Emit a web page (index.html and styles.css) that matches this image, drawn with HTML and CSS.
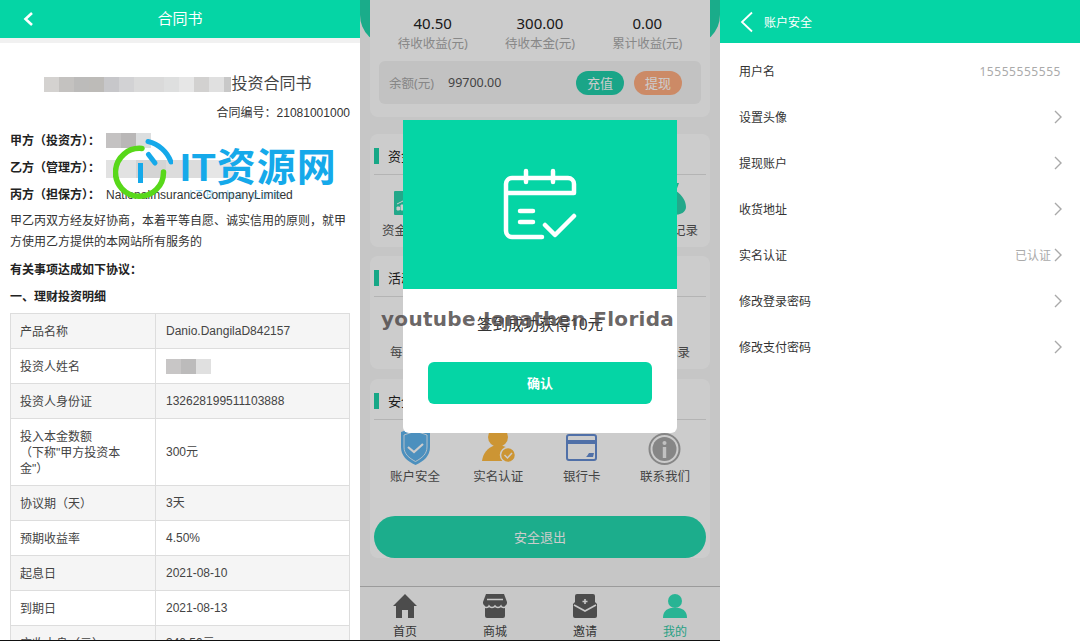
FILE: index.html
```html
<!DOCTYPE html>
<html lang="zh-CN">
<head>
<meta charset="utf-8">
<title>合同书</title>
<link rel="stylesheet" href="styles.css">
</head>
<body>
<div class="screens">

  <section class="phone contract">
    <header class="contract-head">
      <svg class="contract-back" viewBox="0 0 12 16"><path d="M10 2 3.500 8l6.500 6"/></svg>
      <span>合同书</span>
    </header>
    <div class="contract-band"></div>
    <div class="contract-body">
      <h1 class="contract-title"><span class="mosaic mosaic-title"></span>投资合同书</h1>
      <p class="contract-no">合同编号：21081001000</p>
      <p class="party"><b>甲方（投资方）：</b><span class="mosaic mosaic-a"></span></p>
      <p class="party"><b>乙方（管理方）：</b><span class="mosaic mosaic-b"></span></p>
      <p class="party"><b>丙方（担保方）：</b>NationalInsuranceCompanyLimited</p>
      <p class="para">甲乙丙双方经友好协商，本着平等自愿、诚实信用的原则，就甲方使用乙方提供的本网站所有服务的</p>
      <p class="party"><b>有关事项达成如下协议：</b></p>
      <p class="party"><b>一、理财投资明细</b></p>
      <table class="detail">
        <tr><td>产品名称</td><td>Danio.DangilaD842157</td></tr>
        <tr><td>投资人姓名</td><td><span class="mosaic mosaic-c"></span></td></tr>
        <tr><td>投资人身份证</td><td>132628199511103888</td></tr>
        <tr><td>投入本金数额<br>（下称"甲方投资本<br>金"）</td><td>300元</td></tr>
        <tr><td>协议期（天）</td><td>3天</td></tr>
        <tr><td>预期收益率</td><td>4.50%</td></tr>
        <tr><td>起息日</td><td>2021-08-10</td></tr>
        <tr><td>到期日</td><td>2021-08-13</td></tr>
        <tr><td>应收本息（元）</td><td>340.50元</td></tr>
      </table>
    </div>
    <div class="logo-mark">
      <svg class="logo-icon" viewBox="0 0 60 62">
        <path class="logo-green" d="M29 10.500A24 24 0 1 0 50.500 34"/>
        <path class="logo-blue" d="M35 3.500A32 32 0 0 1 58 24"/>
        <path class="logo-blue" d="M35.500 16.500 42 25"/>
        <path class="logo-blue logo-bar" d="M27.500 25v20"/>
      </svg>
      <span class="logo-text">IT资源网</span>
      <span class="logo-sub">ITBobu.com</span>
    </div>
  </section>

  <section class="phone member">
    <div class="member-arc"></div>
    <div class="member-page">
      <div class="card card-stats">
        <div class="stats">
          <div class="stat"><strong>40.50</strong><span>待收收益(元)</span></div>
          <div class="stat"><strong>300.00</strong><span>待收本金(元)</span></div>
          <div class="stat"><strong>0.00</strong><span>累计收益(元)</span></div>
        </div>
        <div class="balance">
          <span class="balance-label">余额(元)</span>
          <span class="balance-value">99700.00</span>
          <span class="pill pill-green">充值</span>
          <span class="pill pill-orange">提现</span>
        </div>
      </div>

      <div class="card card-menu card-funds">
        <h2 class="card-title">资金管理</h2>
        <div class="menu menu-wide">
          <div class="menu-item">
            <svg class="menu-icon" viewBox="0 0 26 32"><path class="fill-green" d="M1 8h10V5h2v3h12a1 1 0 0 1 1 1v22a1 1 0 0 1-1 1H1a1 1 0 0 1-1-1V9a1 1 0 0 1 1-1z"/><path class="chart-mark" d="M3 27h2.500v-3H3zM7 27h2.500v-5H7zM3 21l8-4"/></svg>
            <span>资金明细</span>
          </div>
          <div class="menu-item"><span>充值记录</span></div>
          <div class="menu-item"><span>提现记录</span></div>
          <div class="menu-item">
            <svg class="menu-icon" viewBox="0 0 26 32"><path class="fill-green" d="M7 0h12l-3 8c6 4 10 10 10 16 0 5-5 8-13 8S0 29 0 24c0-6 4-12 10-16z"/></svg>
            <span>收益记录</span>
          </div>
        </div>
      </div>

      <div class="card card-menu card-activity">
        <h2 class="card-title">活动中心</h2>
        <div class="menu">
          <div class="menu-item"><svg class="menu-icon" viewBox="0 0 26 32"></svg><span>每日签到</span></div>
          <div class="menu-item"><svg class="menu-icon" viewBox="0 0 26 32"></svg><span>积分商城</span></div>
          <div class="menu-item"><svg class="menu-icon" viewBox="0 0 26 32"></svg><span>幸运抽奖</span></div>
          <div class="menu-item">
            <svg class="menu-icon" viewBox="0 0 26 32"><path class="fill-red" d="M4 7h20v9H4z"/><path class="fill-tan" d="M6 18h16v12H6z"/></svg>
            <span>中奖记录</span>
          </div>
        </div>
      </div>

      <div class="card card-menu card-safe">
        <h2 class="card-title">安全中心</h2>
        <div class="menu">
          <div class="menu-item">
            <svg class="menu-icon" viewBox="0 0 33 38"><path class="fill-blue" d="M16.500 0 31 5v15c0 9-6 14-14.500 18C8 34 2 29 2 20V5z"/><path class="shield-in" d="M16.500 4 28 8v12c0 7-5 11-11.500 14.500C10 31 5 27 5 20V8z"/><path class="shield-check" d="m9 20 6 5 9-8"/></svg>
            <span>账户安全</span>
          </div>
          <div class="menu-item">
            <svg class="menu-icon" viewBox="0 0 33 38"><circle class="fill-gold" cx="16" cy="10" r="10"/><path class="fill-gold" d="M0 34c1-8 6-13 11-15h10c4 1 7 4 8 7l-9 8z"/><circle class="fill-gold badge-ring" cx="26" cy="28" r="7.500"/><path class="badge-check" d="m22.500 28 3 3 4.500-5"/></svg>
            <span>实名认证</span>
          </div>
          <div class="menu-item">
            <svg class="menu-icon" viewBox="0 0 33 38"><rect class="card-outline" x="2" y="8" width="29" height="25" rx="2"/><path class="fill-navy" d="M2 13h29v4H2zM22 29l2-3h5l-1 4h-7z"/></svg>
            <span>银行卡</span>
          </div>
          <div class="menu-item">
            <svg class="menu-icon" viewBox="0 0 33 38"><circle class="info-ring" cx="16.500" cy="22" r="15"/><circle class="fill-grey" cx="16.500" cy="22" r="12"/><circle class="info-mark" cx="16.500" cy="16" r="2"/><path class="info-mark" d="M14.800 20h3.400v11h-3.400z"/></svg>
            <span>联系我们</span>
          </div>
        </div>
        <div class="logout">安全退出</div>
      </div>
    </div>

    <nav class="tabs">
      <div class="tab">
        <svg class="tab-icon" viewBox="0 0 24 24"><path d="M12 0 24 12h-3v12h-6v-8H9v8H3V12H0z"/></svg>
        <span>首页</span>
      </div>
      <div class="tab">
        <svg class="tab-icon" viewBox="0 0 24 24"><path d="M3 0h18l3 8a4 4 0 0 1-2 4v10a2 2 0 0 1-2 2H4a2 2 0 0 1-2-2V12a4 4 0 0 1-2-4z"/><path class="tab-cut" d="M4 5.500h16M0 12c2.500 2 5 2 6 0 1.500 2 4.500 2 6 0 1.500 2 4.500 2 6 0 1 2 3.500 2 6 0"/></svg>
        <span>商城</span>
      </div>
      <div class="tab">
        <svg class="tab-icon" viewBox="0 0 24 24"><path d="M4 0h16a2 2 0 0 1 2 2v6l2 2v12a2 2 0 0 1-2 2H2a2 2 0 0 1-2-2V10l2-2V2a2 2 0 0 1 2-2z"/><path class="tab-cut" d="M1 11l11 6 11-6M12 5v5M9.500 7.500h5"/></svg>
        <span>邀请</span>
      </div>
      <div class="tab tab-on">
        <svg class="tab-icon" viewBox="0 0 24 24"><circle cx="12" cy="7" r="7"/><path d="M0 24c0-6 3-9 8-10h8c5 1 8 4 8 10z"/></svg>
        <span>我的</span>
      </div>
    </nav>

    <div class="shade"></div>
    <div class="dialog">
      <div class="dialog-top">
        <svg class="dialog-icon" viewBox="0 0 80 80"><path d="M74 28v-9a6 6 0 0 0-6-6H12a6 6 0 0 0-6 6v47a6 6 0 0 0 6 6h30M6 28h68M26 6v11M53 6v11M20 46h13M20 57h13M45 60l10 10 19-19"/></svg>
      </div>
      <p class="dialog-msg">签到成功获得10元</p>
      <div class="dialog-btn">确认</div>
    </div>
    <div class="stamp">youtube Jonathen Florida</div>
  </section>

  <section class="phone account">
    <header class="account-head">
      <svg class="account-back" viewBox="0 0 14 22"><path d="M12 1.500 2 11l10 9.500"/></svg>
      <span>账户安全</span>
    </header>
    <div class="rows">
      <div class="row"><span>用户名</span><span class="row-value row-num">15555555555</span></div>
      <div class="row"><span>设置头像</span><svg class="chev" viewBox="0 0 8 14"><path d="m1 1 6 6-6 6"/></svg></div>
      <div class="row"><span>提现账户</span><svg class="chev" viewBox="0 0 8 14"><path d="m1 1 6 6-6 6"/></svg></div>
      <div class="row"><span>收货地址</span><svg class="chev" viewBox="0 0 8 14"><path d="m1 1 6 6-6 6"/></svg></div>
      <div class="row"><span>实名认证</span><span class="row-value">已认证</span><svg class="chev" viewBox="0 0 8 14"><path d="m1 1 6 6-6 6"/></svg></div>
      <div class="row"><span>修改登录密码</span><svg class="chev" viewBox="0 0 8 14"><path d="m1 1 6 6-6 6"/></svg></div>
      <div class="row"><span>修改支付密码</span><svg class="chev" viewBox="0 0 8 14"><path d="m1 1 6 6-6 6"/></svg></div>
    </div>
  </section>

</div>
</body>
</html>
```
FILE: styles.css
```css
* { box-sizing: border-box; }
html, body { margin: 0; padding: 0; background: #fff; overflow: hidden; }
body {
  font-family: "Liberation Sans", "Noto Sans CJK SC", sans-serif;
  font-size: 12px;
  color: #333;
}
h1, h2, p { margin: 0; font-weight: normal; }
.screens { display: flex; width: 1081px; height: 641px; }
.phone { position: relative; width: 360px; height: 641px; overflow: hidden; flex: none; }

/* contract */
.contract { background: #fff; border-bottom: 1px solid #111; }
.contract-head {
  position: relative;
  height: 38px;
  background: #05d5a5;
  color: #fff;
  font-size: 15px;
  line-height: 37px;
  text-align: center;
}
.contract-back { position: absolute; left: 22px; top: 11px; width: 12px; height: 16px; }
.contract-back path { fill: none; stroke: #fff; stroke-width: 2.600; }
.contract-band { height: 5px; background: #f1f1f1; }
.contract-body { padding: 0 10px; }
.contract-title { margin-top: 30px; font-size: 16px; line-height: 22px; text-align: center; color: #444; padding-right: 4px; }
.contract-no { margin-top: 8px; line-height: 20px; text-align: right; }
.party { line-height: 27px; white-space: nowrap; }
.contract-no + .party { margin-top: 5px; }
.party b { color: #222; margin-right: 6px; }
.para { margin: 2px 0 4px; line-height: 21px; }
.mosaic { display: inline-block; vertical-align: middle; }
.mosaic-title {
  width: 187px; height: 15px;
  background: linear-gradient(90deg, #d4d2d0 0 15px, #c4c2c0 15px 30px, #bcbbba 30px 45px, #bdbbb8 45px 60px, #c7c7ca 60px 75px, #d2d2d4 75px 90px, #dadada 90px 120px, #dedfdf 120px 135px, #e6e6e6 135px 150px, #d2d1d0 150px 165px, #e0e0e0 165px 180px, #c8c8c8 180px);
}
.mosaic-a {
  width: 45px; height: 15px; margin-top: -3px;
  background: linear-gradient(90deg, #c4c2c2 0 15px, #b9b7b7 15px 30px, #dcdedf 30px);
}
.mosaic-b {
  width: 130px; height: 18px;
  background: linear-gradient(90deg, #e2e2e2 0 30px, #d4d4d4 30px 60px, #dcdcdc 60px 100px, #e6e6e6 100px);
}
.mosaic-c {
  width: 45px; height: 15px;
  background: linear-gradient(90deg, #c8c6c6 0 15px, #bcbbbb 15px 30px, #e0e0e0 30px);
}
.detail { width: 340px; margin-top: 2px; border-collapse: collapse; table-layout: fixed; }
.detail td { border: 1px solid #ddd; padding: 9px 10px; line-height: 16px; color: #444; }
.detail td:first-child { width: 145px; padding: 10px 10px 8px 9px; }
.detail tr:nth-child(odd) td { background: #f5f5f5; }

.logo-mark { position: absolute; left: 113px; top: 138px; width: 224px; height: 70px; }
.logo-icon { position: absolute; left: 0; top: 0; width: 60px; height: 62px; }
.logo-green { fill: none; stroke: #58d81a; stroke-width: 5.500; stroke-linecap: round; }
.logo-blue { fill: none; stroke: #15a9ea; stroke-width: 5; stroke-linecap: round; }
.logo-bar { stroke-linecap: butt; }
.logo-text {
  position: absolute; left: 67px; top: 7px;
  font-family: "Liberation Sans", "Noto Sans CJK SC", sans-serif;
  font-weight: bold; font-size: 39px; line-height: 46px;
  letter-spacing: 1px; color: #15a9ea; white-space: nowrap;
}
.logo-sub {
  position: absolute; left: 76px; top: 50px;
  font-size: 12px; letter-spacing: 3px; line-height: 14px;
  color: rgba(21, 169, 234, .45); white-space: nowrap;
}

/* member */
.member { background: #f8f8f8; border-bottom: 1px solid #111; display: flex; flex-direction: column; }
.member-arc { position: absolute; left: 0; top: 0; width: 360px; height: 45px; background: #21d8ad; border-radius: 0 0 30px 30px; }
.member-page { position: relative; padding: 0 10px; flex: 1; font-family: "Noto Sans", "Noto Sans CJK SC", sans-serif; }
.card { background: #fff; border-radius: 8px; }
.card-stats { height: 117px; padding: 12px 9px 0; border-radius: 0 0 8px 8px; }
.stats { display: flex; }
.stat { flex: 1; text-align: center; }
.stat strong { display: block; font-weight: normal; font-size: 15px; line-height: 22px; color: #222; }
.stat span { display: block; font-size: 12.500px; line-height: 20px; color: #aaa; }
.balance {
  display: flex; align-items: center;
  height: 43px; margin-top: 7px; padding: 0 19px 0 10px;
  background: #f3f3f3; border-radius: 6px;
}
.balance-label { font-size: 12.500px; color: #a8a8a8; }
.balance-value { margin-left: 14px; font-size: 12.500px; color: #555; flex: 1; }
.pill { width: 48px; height: 24px; margin-left: 10px; border-radius: 12px; color: #fff; text-align: center; font-size: 13px; line-height: 24px; }
.pill-green { background: #21cfab; }
.pill-orange { background: #ffad80; }

.card-menu { padding: 14px 4px 0; }
.card-funds { margin-top: 17px; height: 113px; }
.card-activity { margin-top: 9px; height: 113px; }
.card-safe { margin-top: 10px; height: 179px; position: relative; }
.card-title {
  position: relative;
  height: 26px; padding-left: 14px;
  font-size: 13px; line-height: 16px; color: #222;
}
.card-title::before {
  content: ""; position: absolute; left: 0; top: 0;
  width: 5px; height: 16px; background: #1fd3a9;
}
.card-title::after {
  content: ""; position: absolute; left: 0; right: 0; top: 26px;
  height: 1px; background: #e2e2e2;
}
.menu { display: flex; justify-content: space-between; padding: 9px 16px 0; }
.menu-wide { padding: 9px 8px 0; }
.menu-item { width: 50px; display: flex; flex-direction: column; align-items: center; white-space: nowrap; font-size: 12.500px; color: #555; }
.menu-item span { line-height: 18px; margin-top: 7px; }
.menu-icon { display: block; width: 26px; height: 32px; }
.card-safe .menu-icon { width: 33px; height: 38px; margin-top: -1px; }
.card-safe .menu-item span { margin-top: 3px; }
.fill-green { fill: #2cd3ad; }
.chart-mark { fill: #fff; stroke: #fff; stroke-width: 1; }
.fill-red { fill: #e05b44; }
.fill-tan { fill: #e9c79a; }
.fill-blue { fill: #5fb4ee; }
.fill-gold { fill: #ffbb41; }
.fill-navy { fill: #648cd2; }
.fill-grey { fill: #a8a8a8; }
.shield-in { fill: #5fb4ee; stroke: #fff; stroke-width: .8; }
.shield-check { fill: none; stroke: #fff; stroke-width: 2.200; }
.badge-ring { stroke: #fff; stroke-width: 1.500; }
.badge-check { fill: none; stroke: #fff; stroke-width: 1.500; }
.card-outline { fill: none; stroke: #648cd2; stroke-width: 2; }
.info-ring { fill: none; stroke: #a8a8a8; stroke-width: 2; }
.info-mark { fill: #f2f2f2; }
.logout {
  position: absolute; left: 4px; right: 4px; bottom: 0; height: 42px;
  border-radius: 21px; background: #23d9af; color: #fff;
  text-align: center; font-size: 13px; line-height: 42px;
}

.tabs {
  position: relative; display: flex; height: 54px;
  background: #fafafa; border-top: 1px solid #c2c2c2;
  font-family: "Noto Sans", "Noto Sans CJK SC", sans-serif;
}
.tab { flex: 1; display: flex; flex-direction: column; align-items: center; padding-top: 7px; font-size: 12px; line-height: 18px; color: #444; }
.tab-icon { display: block; width: 24px; height: 24px; margin-bottom: 5px; flex: none; }
.tab-icon path, .tab-icon circle { fill: #606060; }
.tab-icon .tab-cut { fill: none; stroke: #fafafa; stroke-width: 1.600; }
.tab-on { color: #2fc9a5; }
.tab-on .tab-icon path, .tab-on .tab-icon circle { fill: #33e2ba; }

.shade { position: absolute; left: 0; top: 0; width: 100%; height: 100%; background: rgba(0, 0, 0, .2); }
.dialog {
  position: absolute; left: 43px; top: 120px; width: 274px; height: 313px;
  background: #fff; border-radius: 0 0 6px 6px;
  font-family: "Noto Sans", "Noto Sans CJK SC", sans-serif;
}
.dialog-top { height: 169px; background: #05d5a5; display: flex; align-items: center; justify-content: center; }
.dialog-icon { width: 80px; height: 80px; }
.dialog-icon path { fill: none; stroke: #fff; stroke-width: 4.500; stroke-linecap: round; stroke-linejoin: round; }
.dialog-msg { margin-top: 24px; text-align: center; font-size: 15.500px; line-height: 22px; color: #333; }
.dialog-btn {
  margin: 27px 25px 0; height: 42px; border-radius: 6px;
  background: #05d5a5; color: #fff; text-align: center;
  font-size: 13px; font-weight: bold; line-height: 42px;
}
.stamp {
  position: absolute; left: 21px; top: 306px;
  font-family: "DejaVu Sans", sans-serif; font-weight: bold;
  font-size: 20px; line-height: 26px; letter-spacing: .3px;
  color: rgba(80, 75, 75, .85); white-space: nowrap;
}

/* account */
.account { background: #fff; font-family: "Noto Sans", "Noto Sans CJK SC", sans-serif; }
.account-head {
  display: flex; align-items: center; gap: 10px;
  height: 43px; padding-left: 20px;
  background: #05d5a5; color: #fff; font-size: 12px;
}
.account-back { width: 14px; height: 22px; }
.account-back path { fill: none; stroke: #fff; stroke-width: 1.800; }
.rows { padding-top: 5px; }
.row { display: flex; align-items: center; height: 46px; padding: 0 18px 0 19px; color: #333; }
.row > span:first-child { flex: 1; }
.row-value { color: #aaa; }
.row-num { letter-spacing: .55px; margin-right: 1px; }
.chev { width: 8px; height: 14px; margin-left: 3px; }
.chev path { fill: none; stroke: #a9a9a9; stroke-width: 1.400; }
```
